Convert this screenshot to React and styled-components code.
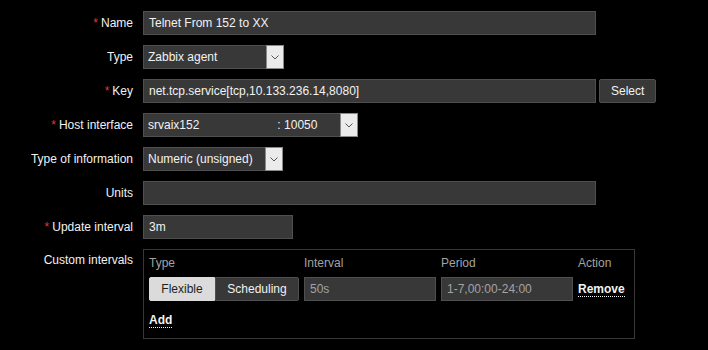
import React from 'react';
import styled, { createGlobalStyle } from 'styled-components';

const GlobalStyle = createGlobalStyle`
  html, body {
    margin: 0;
    padding: 0;
    background: #000;
  }
  body {
    font-family: "Liberation Sans", Arial, sans-serif;
    font-size: 12px;
    color: #f2f2f2;
  }
`;

const Form = styled.div`
  display: grid;
  grid-template-columns: 133px auto;
  grid-auto-rows: auto;
  align-content: start;
  column-gap: 10px;
  row-gap: 10px;
  padding-top: 11px;
  width: 708px;
  height: 350px;
  box-sizing: border-box;
`;

const Label = styled.div`
  text-align: right;
  line-height: 24px;
  height: 24px;
  white-space: nowrap;
  color: #f2f2f2;
  ${(p) => p.$top && 'line-height: 22px;'}
`;

const Star = styled.span`
  color: #e33734;
  margin-right: 3px;
`;

const Field = styled.div`
  display: flex;
  align-items: flex-start;
  gap: 3px;
`;

const Input = styled.div`
  box-sizing: border-box;
  height: 24px;
  width: ${(p) => p.$width}px;
  background: #383838;
  border: 1px solid #4f4f4f;
  padding: 0 5px;
  line-height: 22px;
  color: ${(p) => (p.$disabled ? '#a3a3a3' : '#f2f2f2')};
  white-space: nowrap;
  overflow: hidden;
`;

const Select = styled.div`
  box-sizing: border-box;
  display: flex;
  height: 24px;
  width: ${(p) => p.$width}px;
  background: #383838;
  border: 1px solid #4f4f4f;
`;

const SelectText = styled.div`
  flex: 1;
  display: flex;
  padding-left: 4px;
  line-height: 22px;
  white-space: nowrap;
  overflow: hidden;
`;

const Port = styled.span`
  margin-left: 78px;
`;

const Arrow = styled.div`
  box-sizing: border-box;
  width: 18px;
  margin: -1px -1px -1px 0;
  background: #ebebeb;
  border: 1px solid #8a8a8a;
  display: flex;
  align-items: center;
  justify-content: center;
`;

const Button = styled.div`
  box-sizing: border-box;
  height: 24px;
  padding: 0 11px;
  line-height: 22px;
  background: #383838;
  border: 1px solid #4f4f4f;
  border-radius: 2px;
  color: #f2f2f2;
`;

const IntervalsBox = styled.div`
  box-sizing: border-box;
  width: 492px;
  height: 90px;
  border: 1px solid #383838;
  padding: 5px 5px 0;
`;

const IntervalsGrid = styled.div`
  display: grid;
  grid-template-columns: 150px 132px 132px auto;
  column-gap: 5px;
  row-gap: 6px;
  align-items: center;
`;

const Header = styled.div`
  color: #a3a3a3;
  height: 16px;
  line-height: 16px;
`;

const Segmented = styled.div`
  display: flex;
  height: 24px;
`;

const Segment = styled.div`
  box-sizing: border-box;
  width: ${(p) => p.$width}px;
  height: 24px;
  line-height: 22px;
  text-align: center;
  background: ${(p) => (p.$active ? '#dbdbdb' : '#383838')};
  color: ${(p) => (p.$active ? '#1f1f1f' : '#f2f2f2')};
  border: 1px solid ${(p) => (p.$active ? '#dbdbdb' : '#4f4f4f')};
  ${(p) => p.$first && 'border-radius: 2px 0 0 2px;'}
  ${(p) => p.$last && 'border-radius: 0 2px 2px 0;'}
`;

const LinkAction = styled.span`
  font-weight: bold;
  color: #f2f2f2;
  border-bottom: 1px dotted #f2f2f2;
  line-height: 14px;
  justify-self: start;
`;

const AddRow = styled.div`
  margin-top: 12px;
`;

const ChevronDown = () => (
  <svg width="8" height="5" viewBox="0 0 8 5">
    <path d="M0.5 0.5 L4 4 L7.5 0.5" fill="none" stroke="#555" strokeWidth="1" />
  </svg>
);

const Row = ({ label, required, children }) => (
  <>
    <Label>
      {required && <Star>*</Star>}
      {label}
    </Label>
    <Field>{children}</Field>
  </>
);

export default function App() {
  return (
    <>
      <GlobalStyle />
      <Form>
        <Row label="Name" required>
          <Input $width={453}>Telnet From 152 to XX</Input>
        </Row>
        <Row label="Type">
          <Select $width={141}>
            <SelectText>Zabbix agent</SelectText>
            <Arrow><ChevronDown /></Arrow>
          </Select>
        </Row>
        <Row label="Key" required>
          <Input $width={453}>net.tcp.service[tcp,10.133.236.14,8080]</Input>
          <Button>Select</Button>
        </Row>
        <Row label="Host interface" required>
          <Select $width={215}>
            <SelectText>
              srvaix152<Port>: 10050</Port>
            </SelectText>
            <Arrow><ChevronDown /></Arrow>
          </Select>
        </Row>
        <Row label="Type of information">
          <Select $width={140}>
            <SelectText>Numeric (unsigned)</SelectText>
            <Arrow><ChevronDown /></Arrow>
          </Select>
        </Row>
        <Row label="Units">
          <Input $width={453} />
        </Row>
        <Row label="Update interval" required>
          <Input $width={150}>3m</Input>
        </Row>
        <Label $top>Custom intervals</Label>
        <IntervalsBox>
          <IntervalsGrid>
            <Header>Type</Header>
            <Header>Interval</Header>
            <Header>Period</Header>
            <Header>Action</Header>
            <Segmented>
              <Segment $width={66} $active $first>Flexible</Segment>
              <Segment $width={84} $last>Scheduling</Segment>
            </Segmented>
            <Input $width={132} $disabled>50s</Input>
            <Input $width={132} $disabled>1-7,00:00-24:00</Input>
            <LinkAction>Remove</LinkAction>
          </IntervalsGrid>
          <AddRow>
            <LinkAction>Add</LinkAction>
          </AddRow>
        </IntervalsBox>
      </Form>
    </>
  );
}
